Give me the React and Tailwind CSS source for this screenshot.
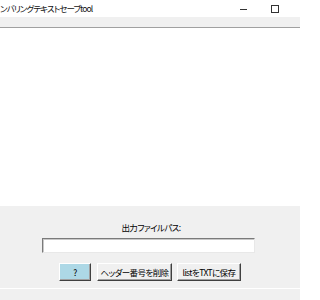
import React from "react";

const font = "font-['Noto_Sans_CJK_JP','Noto_Sans',sans-serif] [font-feature-settings:'palt']";

function Button({ children, className = "", w }) {
  return (
    <button
      className={`${w} h-[18px] flex items-center justify-center whitespace-nowrap text-[8.5px] tracking-[-0.6px] leading-none text-black border border-t-white border-l-white border-r-[#404040] border-b-[#404040] shadow-[inset_-1px_-1px_0_#a0a0a0] ${className}`}
    >
      {children}
    </button>
  );
}

export default function App() {
  return (
    <div className={`w-[300px] h-[300px] flex flex-col bg-[#f0f0f0] overflow-hidden ${font}`}>
      {/* title bar */}
      <div className="h-[17px] bg-white flex items-center shrink-0">
        <span className="text-[8.5px] tracking-[-0.9px] leading-none text-[#111] whitespace-nowrap">
          ンバリングテキストセーブtool
        </span>
        <div className="ml-auto flex items-center pr-[21px]">
          <div className="w-[7px] h-px bg-[#333] mt-[2px]" />
          <div className="ml-[24px] w-[8px] h-[8px] border border-[#333]" />
        </div>
      </div>

      {/* menu strip */}
      <div className="h-[10px] bg-[#f0f0f0] shrink-0" />
      <div className="h-px bg-[#a0a0a0] shrink-0" />

      {/* list area */}
      <div className="flex-1 bg-white" />

      {/* controls */}
      <div className="h-[82px] shrink-0 bg-[#f0f0f0] flex flex-col">
        <div className="mt-[16px] text-[8.5px] tracking-[-0.6px] leading-[10px] text-black text-center pl-[2px] whitespace-nowrap">
          出力ファイルパス:
        </div>
        <div className="mt-[6px] ml-[42px] w-[213px] h-[15px] bg-white border border-t-[#7a7a7a] border-l-[#7a7a7a] border-r-[#e8e8e8] border-b-[#e8e8e8] shadow-[inset_1px_1px_0_#c8c8c8]" />
        <div className="mt-[10px] ml-[59px] flex">
          <Button w="w-[32px]" className="bg-[#add8e6]">?</Button>
          <Button w="w-[75px]" className="ml-[6px] bg-[#f0f0f0]">ヘッダー番号を削除</Button>
          <Button w="w-[64px]" className="ml-[5px] bg-[#f0f0f0]">listをTXTに保存</Button>
        </div>
      </div>
      <div className="h-px bg-white shrink-0" />
      <div className="h-[11px] shrink-0 bg-[#f0f0f0]" />
    </div>
  );
}
